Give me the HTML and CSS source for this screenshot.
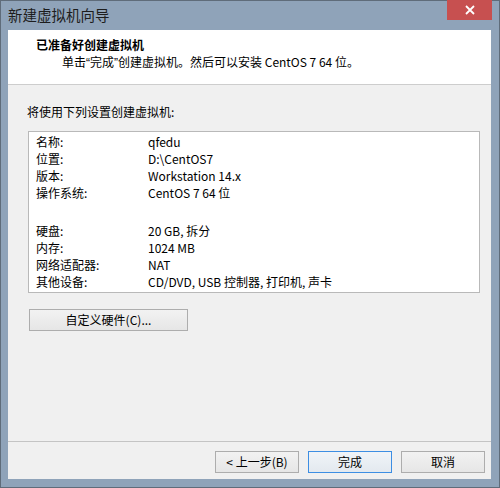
FILE: index.html
```html
<!DOCTYPE html>
<html lang="zh-CN">
<head>
<meta charset="utf-8">
<title>新建虚拟机向导</title>
<link rel="stylesheet" href="styles.css">
</head>
<body>
<div class="window">
  <div class="titlebar">
    <span class="title">新建虚拟机向导</span>
    <span class="close"><svg width="10" height="10" viewBox="0 0 10 10"><path d="M1 1L9 9M9 1L1 9" stroke="#fff" stroke-width="1.8"/></svg></span>
  </div>
  <div class="client">
    <div class="header">
      <div class="h-title">已准备好创建虚拟机</div>
      <div class="h-sub">单击<span class="q">“</span>完成<span class="q">”</span>创建虚拟机。然后可以安装 CentOS 7 64 位。</div>
    </div>
    <div class="body">
      <div class="intro">将使用下列设置创建虚拟机:</div>
      <div class="listbox">
        <div class="row"><span class="k">名称:</span><span class="v">qfedu</span></div>
        <div class="row"><span class="k">位置:</span><span class="v">D:\CentOS7</span></div>
        <div class="row"><span class="k">版本:</span><span class="v">Workstation 14.x</span></div>
        <div class="row"><span class="k">操作系统:</span><span class="v">CentOS 7 64 位</span></div>
        <div class="spacer"></div>
        <div class="row"><span class="k">硬盘:</span><span class="v">20 GB, 拆分</span></div>
        <div class="row"><span class="k">内存:</span><span class="v">1024 MB</span></div>
        <div class="row"><span class="k">网络适配器:</span><span class="v">NAT</span></div>
        <div class="row"><span class="k">其他设备:</span><span class="v">CD/DVD, USB 控制器, 打印机, 声卡</span></div>
      </div>
      <div class="btn custom">自定义硬件(C)...</div>
    </div>
    <div class="footer">
      <div class="btn">&lt; 上一步(B)</div>
      <div class="btn default">完成</div>
      <div class="btn">取消</div>
    </div>
  </div>
</div>
</body>
</html>
```
FILE: styles.css
```css
html, body {
  margin: 0;
  padding: 0;
  background: #ffffff;
}
body {
  font-family: "Noto Sans CJK SC", "Noto Sans", sans-serif;
  font-size: 12px;
  color: #000;
}
.window {
  width: 500px;
  height: 488px;
  box-sizing: border-box;
  border: 1px solid #5f6c7a;
  background: #8fa3b9;
  display: flex;
  flex-direction: column;
  padding: 0 8px 8px 7px;
}
.titlebar {
  height: 29px;
  display: flex;
  align-items: flex-start;
  justify-content: space-between;
}
.title {
  font-size: 14.5px;
  line-height: 29px;
  color: #1d1d1d;
  margin-top: -1px;
}
.close {
  width: 45px;
  height: 20px;
  margin-top: -1px;
  margin-right: -1px;
  background: #c75050;
  display: flex;
  align-items: center;
  justify-content: center;
}
.client {
  flex: 1;
  background: #f0f0f0;
  display: flex;
  flex-direction: column;
}
.header {
  height: 54px;
  background: #fff;
  border-bottom: 1px solid #cdcdcd;
  box-sizing: content-box;
}
.h-title {
  font-weight: bold;
  line-height: 16px;
  margin: 7px 0 0 28px;
}
.h-sub {
  line-height: 16px;
  margin: 1px 0 0 54px;
}
.q {
  font-family: "Liberation Sans", sans-serif;
}
.body {
  flex: 1;
  padding: 19px 11px 0 19px;
}
.intro {
  line-height: 16px;
}
.listbox {
  margin-top: 11px;
  margin-left: 1px;
  height: 162px;
  box-sizing: border-box;
  background: #fff;
  border: 1px solid #b9b9b9;
  padding: 1px 0 0 7px;
}
.row {
  display: flex;
  line-height: 17px;
  height: 17px;
}
.k {
  width: 112px;
}
.spacer {
  height: 21px;
}
.btn {
  height: 22px;
  box-sizing: border-box;
  border: 1px solid #adadad;
  background: linear-gradient(#f2f2f2, #e6e6e6);
  display: flex;
  align-items: center;
  justify-content: center;
  line-height: 16px;
}
.custom {
  margin-top: 16px;
  margin-left: 2px;
  width: 159px;
}
.footer {
  border-top: 1px solid #c4c4c4;
  padding: 9px 6px 6px 0;
  display: flex;
  justify-content: flex-end;
  gap: 9px;
}
.footer .btn {
  width: 84px;
}
.btn.default {
  border-color: #3d8ee3;
  background: linear-gradient(#f0f4f8, #e3e9ef);
}
```
